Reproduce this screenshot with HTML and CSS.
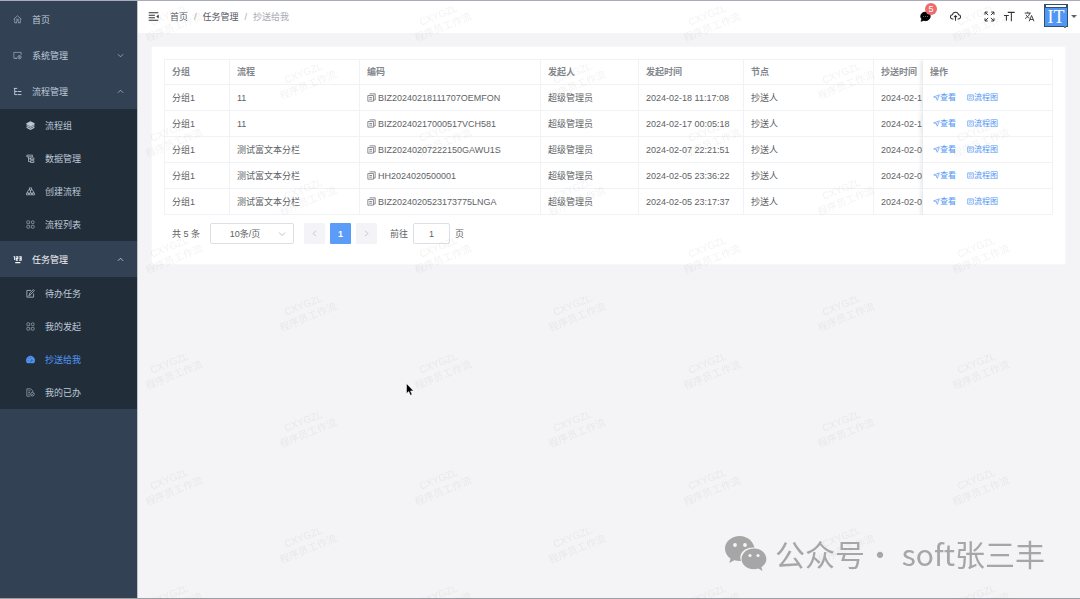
FILE: index.html
```
<!DOCTYPE html>
<html lang="zh-CN">
<head>
    <meta charset="UTF-8">
    <meta name="viewport" content="width=device-width, initial-scale=1.0">
    <title>抄送给我</title>
    <link rel="stylesheet" href="styles.css">
</head>
<body>
    <!-- Icon sprite -->
    <svg class="sprite" aria-hidden="true">
        <symbol id="i-home" viewBox="0 0 16 16"><path d="M1 7.5 8 1.5l7 6M3 6.5V14h3.5v-3.5a1.5 1.5 0 0 1 3 0V14H13V6.5M5.5 7.5h5"/></symbol>
        <symbol id="i-system" viewBox="0 0 16 16"><path d="M7 13H1.5V2.5h13V7M4 13h3"/><circle cx="11.500" cy="11" r="3"/><circle cx="11.500" cy="11" r="1"/></symbol>
        <symbol id="i-tree" viewBox="0 0 16 16"><path d="M1.500 2.500h6M3 2.500V13.500h4M3 8h4M8 8h7M8 13.500h7" stroke-width="1.700"/></symbol>
        <symbol id="i-layers" viewBox="0 0 16 16"><path d="M8 1 15 4.500 8 8 1 4.500z" fill="currentColor"/><path d="M1 8l7 3.500L15 8M1 11.300l7 3.500 7-3.500M1 5l7 3.500L15 5" stroke-width="2"/></symbol>
        <symbol id="i-data" viewBox="0 0 16 16"><path d="M1.500 2h10v3h-10zM4.500 5v8.500H8M4.500 8.500H8M8 7h6v3H8zM8 12h6v3H8z" stroke-width="1.300"/></symbol>
        <symbol id="i-flow" viewBox="0 0 16 16"><path d="M6 1.500h4v4H6zM1 10.500h3.500V14H1zM6.300 10.500h3.500V14H6.300zM11.500 10.500H15V14h-3.500zM8 5.500v5M6 4 3 7.500v3M10 4l3 3.500v3" stroke-width="1.300"/></symbol>
        <symbol id="i-grid" viewBox="0 0 16 16"><rect x="1.500" y="1.500" width="5" height="5" rx="1"/><circle cx="12" cy="4" r="2.600"/><rect x="1.500" y="9.500" width="5" height="5" rx="1"/><rect x="9.500" y="9.500" width="5" height="5" rx="1"/></symbol>
        <symbol id="i-task" viewBox="0 0 16 16"><path d="M1 3h2v6M5.500 3h3v3h-2.500v3H9M11 3h3.500v6H11M11.500 6h3M4 13.500h9" stroke-width="2"/></symbol>
        <symbol id="i-edit" viewBox="0 0 16 16"><path d="M9 2.500H1.500v12h12V8M6 10l.6-2.700L13 1l2 2-6.400 6.400zM4 12h4" stroke-width="1.300"/></symbol>
        <symbol id="i-dash" viewBox="0 0 16 16"><path d="M2 14a7.500 7.500 0 1 1 12 0z" fill="currentColor"/><path class="cut" d="M8 13l2.500-5.500M3 10h1.500M5 6l1 1M8 4v1.500M13 10h-1.500"/></symbol>
        <symbol id="i-done" viewBox="0 0 16 16"><path d="M8 14.500H1.500v-13h7l3.500 3.500v2M4 5h4M4 8h3M4 11h3"/><circle cx="11.500" cy="11" r="3.200"/><path d="M10 11l1 1 2-2"/></symbol>
        <symbol id="i-down" viewBox="0 0 16 16"><path d="M2 5l6 6 6-6" stroke-width="1.500"/></symbol>
        <symbol id="i-fold" viewBox="0 0 16 16"><path d="M1 2.500h14M1 6.200h9M1 9.800h9M1 13.500h14" stroke-width="1.700"/><path d="M15.500 5v6l-3.500-3z" fill="currentColor" stroke="none"/></symbol>
        <symbol id="i-chat" viewBox="0 0 16 16"><path d="M8 1.500a7 6.300 0 1 1-2.500 12.200L1.500 15l1-3.200A6.500 6.300 0 0 1 8 1.500z" fill="currentColor" stroke="currentColor"/><path class="dots" d="M4.500 8h1.400M7.300 8h1.400M10.100 8h1.400"/></symbol>
        <symbol id="i-cloud" viewBox="0 0 16 16"><path d="M5 11.500H3.800a3 3 0 0 1-.3-6 4.600 4.600 0 0 1 9 0 3 3 0 0 1-.3 6H11M8 14V7M5.800 9 8 6.800 10.200 9" stroke-width="1.500"/></symbol>
        <symbol id="i-full" viewBox="0 0 16 16"><path d="M1.500 5.500v-4h4M1.500 1.500l4.500 4.500M10.500 1.500h4v4M14.500 1.500l-4.500 4.500M1.500 10.500v4h4M1.500 14.500l4.500-4.500M10.500 14.500h4v-4M14.500 14.500l-4.500-4.500" stroke-width="1.400"/></symbol>
        <symbol id="i-size" viewBox="0 0 16 16"><path d="M5.500 2h10M10.700 2v13M0 6.500h7M3.500 6.500V14" stroke-width="1.500"/></symbol>
        <symbol id="i-lang" viewBox="0 0 16 16"><path d="M1 3h9M5.500 1v2M8.500 3C7.500 7 4.500 9.500 1.500 11M3 5.500c1 2.500 3 4 5 5M7.500 15l3.500-8.500 3.500 8.500M8.700 12.300h4.600" stroke-width="1.300"/></symbol>
        <symbol id="i-copy" viewBox="0 0 16 16"><path d="M4.500 1.500h10v11h-2.300M1.500 4.500h10v10h-10zM4 8h5M4 11h5" stroke-width="1.300"/></symbol>
        <symbol id="i-send" viewBox="0 0 16 16"><path d="M1.500 6.500 14.500 2 10 14.500 7.500 9zM7.500 9l3-3" stroke-width="1.500"/></symbol>
        <symbol id="i-chart" viewBox="0 0 16 16"><path d="M1.500 2h13v12h-13zM4 5h8M4.500 11.500 7 8l2.500 2.500L12 8" stroke-width="1.500"/></symbol>
    </svg>

    <div class="app">
        <nav class="sidebar">
            <a class="menu-item" href="#"><svg class="icon"><use href="#i-home"/></svg>首页</a>
            <a class="menu-item" href="#"><svg class="icon"><use href="#i-system"/></svg>系统管理<svg class="arrow"><use href="#i-down"/></svg></a>
            <a class="menu-item" href="#"><svg class="icon"><use href="#i-tree"/></svg>流程管理<svg class="arrow open"><use href="#i-down"/></svg></a>
            <div class="submenu">
                <a class="sub-item" href="#"><svg class="icon"><use href="#i-layers"/></svg>流程组</a>
                <a class="sub-item" href="#"><svg class="icon"><use href="#i-data"/></svg>数据管理</a>
                <a class="sub-item" href="#"><svg class="icon"><use href="#i-flow"/></svg>创建流程</a>
                <a class="sub-item" href="#"><svg class="icon"><use href="#i-grid"/></svg>流程列表</a>
            </div>
            <a class="menu-item current" href="#"><svg class="icon"><use href="#i-task"/></svg>任务管理<svg class="arrow open"><use href="#i-down"/></svg></a>
            <div class="submenu">
                <a class="sub-item" href="#"><svg class="icon"><use href="#i-edit"/></svg>待办任务</a>
                <a class="sub-item" href="#"><svg class="icon"><use href="#i-grid"/></svg>我的发起</a>
                <a class="sub-item active" href="#"><svg class="icon"><use href="#i-dash"/></svg>抄送给我</a>
                <a class="sub-item" href="#"><svg class="icon"><use href="#i-done"/></svg>我的已办</a>
            </div>
        </nav>

        <div class="main">
            <header class="navbar">
                <button class="icon-btn fold" aria-label="收起菜单"><svg><use href="#i-fold"/></svg></button>
                <div class="breadcrumb">
                    <a href="#">首页</a><span class="sep">/</span><a href="#">任务管理</a><span class="sep">/</span><span class="here">抄送给我</span>
                </div>
                <div class="tools">
                    <button class="icon-btn message" aria-label="消息"><svg><use href="#i-chat"/></svg><span class="badge">5</span></button>
                    <button class="icon-btn cloud" aria-label="上传"><svg><use href="#i-cloud"/></svg></button>
                    <button class="icon-btn" aria-label="全屏"><svg><use href="#i-full"/></svg></button>
                    <button class="icon-btn" aria-label="字号"><svg><use href="#i-size"/></svg></button>
                    <button class="icon-btn" aria-label="语言"><svg><use href="#i-lang"/></svg></button>
                    <button class="user" aria-label="用户">
                        <svg class="avatar" viewBox="0 0 24 24">
                            <rect width="24" height="23" fill="#334f70"/>
                            <rect x="2" y="1" width="20" height="2" fill="#fff"/>
                            <rect x="1" y="4" width="22" height="18" fill="#5096f5"/>
                            <rect x="20" y="22" width="2" height="2" fill="#3f9a4c"/>
                            <text x="12" y="19" text-anchor="middle">IT</text>
                        </svg>
                        <span class="caret"></span>
                    </button>
                </div>
            </header>

            <section class="card">
                <div class="table-wrap">
                    <table class="table">
                        <colgroup>
                            <col class="col-group"><col class="col-flow"><col class="col-code"><col class="col-user"><col class="col-time"><col class="col-node"><col class="col-copied"><col class="col-action">
                        </colgroup>
                        <thead>
                            <tr><th>分组</th><th>流程</th><th>编码</th><th>发起人</th><th>发起时间</th><th>节点</th><th class="clip">抄送时间</th><th class="fixed">操作</th></tr>
                        </thead>
                        <tbody id="rows"></tbody>
                    </table>
                </div>
                <div class="pagination">
                    <span class="total">共 5 条</span>
                    <div class="size-select">
                        <select aria-label="每页条数"><option>10条/页</option></select>
                        <svg><use href="#i-down"/></svg>
                    </div>
                    <div class="pager">
                        <button class="page prev" aria-label="上一页" disabled><svg><use href="#i-down"/></svg></button>
                        <button class="page active">1</button>
                        <button class="page next" aria-label="下一页" disabled><svg><use href="#i-down"/></svg></button>
                    </div>
                    <label class="jump" for="jump">前往<input type="text" id="jump" value="1">页</label>
                </div>
            </section>
        </div>
    </div>

    <!-- Page watermark -->
    <svg class="watermark" aria-hidden="true">
        <defs>
            <pattern id="mark" x="105" y="-36" width="269" height="116" patternUnits="userSpaceOnUse">
                <g transform="translate(67 58) rotate(-22)"><text y="-4">CXYGZL</text><text y="9">程序员工作流</text></g>
                <g transform="translate(201 0) rotate(-22)"><text y="-4">CXYGZL</text><text y="9">程序员工作流</text></g>
                <g transform="translate(201 116) rotate(-22)"><text y="-4">CXYGZL</text><text y="9">程序员工作流</text></g>
            </pattern>
        </defs>
        <rect x="138" width="100%" height="100%" fill="url(#mark)"/>
    </svg>

    <div class="account">
        <svg viewBox="0 0 42 35">
            <path d="M15 0C6.500 0 0 5.600 0 12.700c0 4 2.200 7.500 5.500 9.900L4.300 27l5-2.700c1.800.5 3.700.8 5.700.8h1C13 17 20 11 29.500 11.500 28 5 22 0 15 0z"/>
            <path d="M29 12.500c-7 0-12.500 4.700-12.500 10.500S22 33.200 29 33.200c1.500 0 3-.2 4.300-.6l4.200 2.300-1.100-3.700c3-1.900 5-4.900 5-8.200 0-5.800-5.400-10.500-12.400-10.500z"/>
            <g fill="#f4f4f6"><circle cx="10" cy="9" r="1.900"/><circle cx="20" cy="9" r="1.900"/><circle cx="25" cy="19.500" r="1.600"/><circle cx="33" cy="19.500" r="1.600"/></g>
        </svg>
        <span>公众号· soft张三丰</span>
    </div>

    <svg class="pointer" viewBox="0 0 8 13" aria-hidden="true"><path d="M.5.500v10l2.300-2 1.600 3.800 1.700-.7-1.600-3.700h3z"/></svg>

    <script src="script.js"></script>
</body>
</html>
```
FILE: styles.css
```
* {
    box-sizing: border-box;
}
body {
    margin: 0;
    font-family: "Liberation Sans", "Noto Sans CJK SC", sans-serif;
    font-size: 9px;
    color: #606266;
    background-color: #f4f4f6;
    overflow: hidden;
}
button, input, select {
    font: inherit;
    color: inherit;
}
button {
    padding: 0;
    border: none;
    background: none;
    cursor: pointer;
}
a {
    color: inherit;
    text-decoration: none;
}
svg {
    display: block;
    fill: none;
    stroke: currentColor;
}
.sprite {
    position: absolute;
    width: 0;
    height: 0;
}
.app {
    display: flex;
    min-height: 100vh;
    border-top: 1px solid #a9abbd;
    border-bottom: 1px solid #9a9fa5;
}

/* Sidebar */
.sidebar {
    width: 138px;
    flex-shrink: 0;
    background-color: #334155;
    color: #bfcbd9;
    border-right: 1px solid #c0c4cc;
}
.menu-item, .sub-item {
    display: flex;
    align-items: center;
}
.menu-item {
    height: 36px;
    padding: 0 13px;
    gap: 10px;
}
.menu-item.current {
    color: #f4f4f5;
}
.submenu {
    background-color: #222d3a;
}
.sub-item {
    height: 33px;
    padding-left: 26px;
    gap: 10px;
}
.sub-item.active {
    color: #5096f5;
}
.icon {
    width: 9px;
    height: 9px;
}
.arrow {
    width: 7px;
    height: 7px;
    margin-left: auto;
}
.arrow.open {
    transform: rotate(180deg);
}
.cut {
    stroke: #222d3a;
}

/* Top bar */
.main {
    flex: 1;
    min-width: 0;
}
.navbar {
    display: flex;
    align-items: center;
    height: 32px;
    padding: 0 3px 2px 10px;
    background-color: #fff;
    color: #303133;
}
.icon-btn svg {
    width: 11px;
    height: 11px;
}
.breadcrumb {
    margin-left: 11px;
    color: #55585e;
}
.sep {
    margin: 0 6px;
    color: #a8abb2;
}
.here {
    color: #a8abb2;
}
.tools {
    display: flex;
    align-items: center;
    gap: 9px;
    margin-left: auto;
}
.message {
    position: relative;
    margin-right: 10px;
    color: #000;
}
.dots {
    stroke: #999;
}
.badge {
    position: absolute;
    top: -8px;
    left: 5px;
    width: 12px;
    height: 12px;
    border-radius: 6px;
    background-color: #ee6b6b;
    color: #fff;
    line-height: 12px;
}
.cloud {
    margin-right: 14px;
}
.user {
    display: flex;
    align-items: center;
    gap: 3px;
}
.avatar {
    width: 24px;
    height: 24px;
    stroke: none;
}
.avatar text {
    font-family: "Liberation Serif", serif;
    font-size: 18px;
    fill: #fff;
}
.caret {
    border: 3px solid transparent;
    border-top-color: #606266;
    border-bottom: none;
}

/* Table card */
.card {
    margin: 13px 14px 13px 13px;
    padding: 12px 12px 20px;
    background-color: #fff;
    border: 1px solid #f7f7f9;
    border-radius: 2px;
}
.table-wrap {
    border: 1px solid #f0f2f6;
    border-bottom: none;
}
.table {
    width: 100%;
    table-layout: fixed;
    border-collapse: separate;
    border-spacing: 0;
}
.col-group { width: 65px; }
.col-flow { width: 130px; }
.col-code { width: 181px; }
.col-user { width: 98px; }
.col-time { width: 105px; }
.col-node { width: 130px; }
.col-copied { width: 49px; }
th, td {
    height: 26px;
    padding: 0 7px;
    border-right: 1px solid #f0f2f6;
    border-bottom: 1px solid #f0f2f6;
    line-height: 12px;
    text-align: left;
    white-space: nowrap;
}
th {
    height: 25px;
    color: #83868c;
}
.clip {
    overflow: hidden;
    padding-right: 0;
    border-right: none;
}
.clip div {
    overflow: hidden;
}
.fixed {
    position: relative;
    border-right: none;
    background-color: #fff;
    box-shadow: -2px 0 4px rgba(0, 0, 0, 0.1);
    clip-path: inset(0 0 0 -8px);
}
.code, .actions, .actions a {
    display: flex;
    align-items: center;
}
.code {
    gap: 2px;
}
.code svg {
    width: 9px;
    height: 9px;
}
.actions {
    gap: 11px;
    padding-left: 3px;
    font-size: 8px;
    color: #5096f5;
}
.actions svg {
    width: 7px;
    height: 7px;
}

/* Pagination */
.pagination {
    display: flex;
    align-items: center;
    margin-top: 8px;
    padding-left: 8px;
    gap: 10px;
}
.size-select {
    position: relative;
}
.size-select select {
    appearance: none;
    display: block;
    width: 84px;
    height: 21px;
    padding: 0 14px 0 0;
    border: 1px solid #dcdfe6;
    border-radius: 2px;
    background-color: #fff;
    text-align: center;
    text-align-last: center;
}
.size-select svg {
    position: absolute;
    top: 7px;
    right: 8px;
    width: 8px;
    height: 8px;
    color: #a8abb2;
    pointer-events: none;
}
.pager {
    display: flex;
    gap: 5px;
}
.page {
    display: flex;
    align-items: center;
    justify-content: center;
    width: 21px;
    height: 21px;
    border-radius: 1px;
    background-color: #f4f4f8;
    color: #a8abb2;
}
.page svg {
    width: 7px;
    height: 7px;
}
.page.active {
    background-color: #5a9cf8;
    color: #fff;
    font-weight: bold;
}
.prev svg {
    transform: rotate(90deg);
}
.next svg {
    transform: rotate(-90deg);
}
.jump {
    display: flex;
    align-items: center;
    gap: 5px;
    margin-left: 3px;
}
.jump input {
    width: 37px;
    height: 21px;
    padding: 0;
    border: 1px solid #dcdfe6;
    border-radius: 2px;
    text-align: center;
}

/* Overlays */
.watermark {
    position: fixed;
    inset: 0;
    width: 100%;
    height: 100%;
    stroke: none;
    pointer-events: none;
}
.watermark text {
    font-size: 10px;
    fill: rgba(130, 130, 120, 0.1);
    text-anchor: middle;
}
.account {
    position: fixed;
    right: 35px;
    bottom: 24px;
    display: flex;
    align-items: center;
    gap: 8px;
    font-family: "Noto Sans CJK SC", sans-serif;
    font-size: 30px;
    line-height: 44px;
    color: #a6a6a6;
}
.account svg {
    width: 42px;
    height: 35px;
    fill: #a6a6a6;
    stroke: none;
}
.pointer {
    position: fixed;
    top: 383px;
    left: 406px;
    width: 8px;
    height: 13px;
    fill: #000;
    stroke: #fff;
    stroke-width: 0.5px;
}
```
FILE: script.js
```
const records = [
    { flow: '11', code: 'BIZ20240218111707OEMFON', start: '2024-02-18 11:17:08', copied: '2024-02-1' },
    { flow: '11', code: 'BIZ20240217000517VCH581', start: '2024-02-17 00:05:18', copied: '2024-02-1' },
    { flow: '测试富文本分栏', code: 'BIZ20240207222150GAWU1S', start: '2024-02-07 22:21:51', copied: '2024-02-0' },
    { flow: '测试富文本分栏', code: 'HH2024020500001', start: '2024-02-05 23:36:22', copied: '2024-02-0' },
    { flow: '测试富文本分栏', code: 'BIZ2024020523173775LNGA', start: '2024-02-05 23:17:37', copied: '2024-02-0' }
];

// Render table rows
document.getElementById('rows').innerHTML = records.map(item => `
    <tr>
        <td>分组1</td>
        <td>${item.flow}</td>
        <td><div class="code"><svg><use href="#i-copy"/></svg>${item.code}</div></td>
        <td>超级管理员</td>
        <td>${item.start}</td>
        <td>抄送人</td>
        <td class="clip"><div>${item.copied}</div></td>
        <td class="fixed"><div class="actions">
            <a href="#"><svg><use href="#i-send"/></svg>查看</a>
            <a href="#"><svg><use href="#i-chart"/></svg>流程图</a>
        </div></td>
    </tr>
`).join('');
```
